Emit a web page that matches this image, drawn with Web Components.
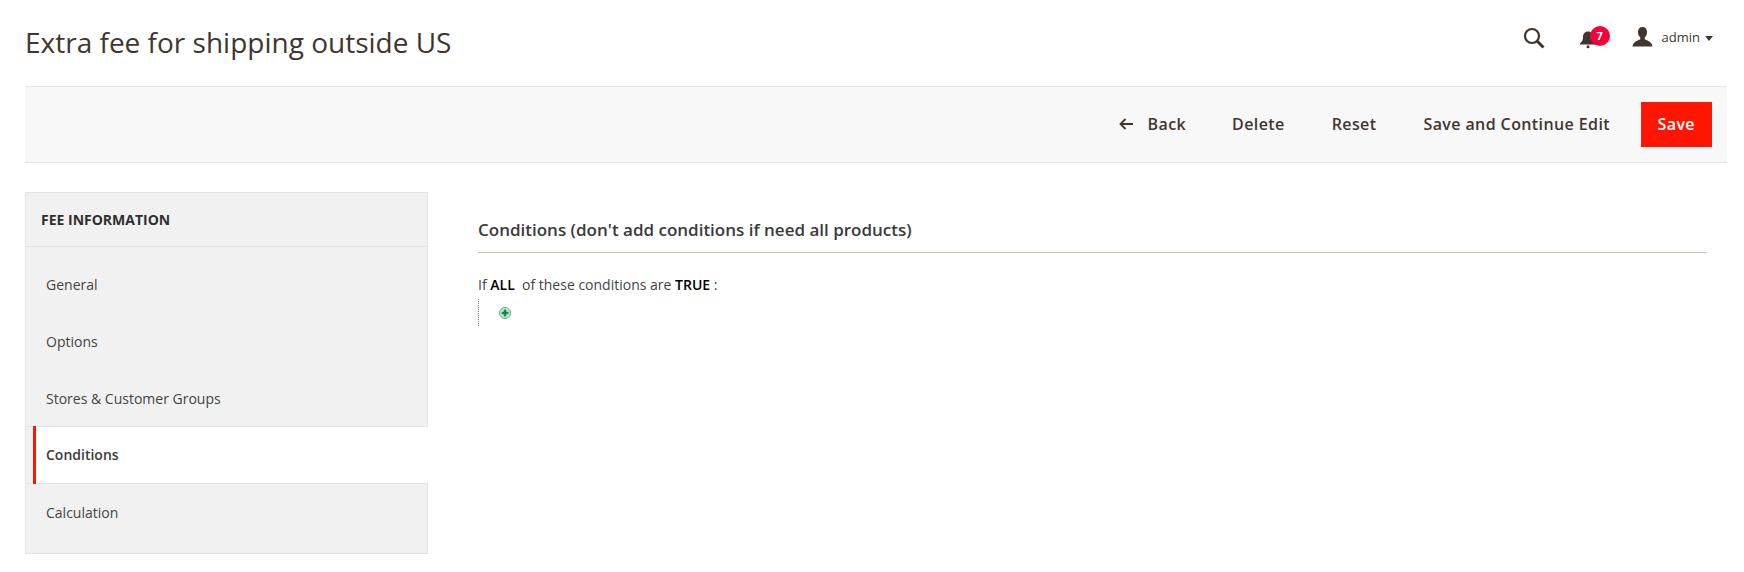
<!DOCTYPE html>
<html lang="en">
<head>
<meta charset="utf-8">
<title>Extra fee for shipping outside US</title>
<style>
  html, body { margin: 0; background: #fff; }
  body { font-family: "Open Sans", "Liberation Sans", sans-serif; color: #41362f; }
</style>
</head>
<body>
<fee-page>
  <page-header slot="header" title="Extra fee for shipping outside US" user="admin" count="7"></page-header>
  <action-bar slot="actions">
    <action-button icon="back">Back</action-button>
    <action-button>Delete</action-button>
    <action-button>Reset</action-button>
    <action-button>Save and Continue Edit</action-button>
    <action-button primary>Save</action-button>
  </action-bar>
  <side-tabs slot="side" heading="FEE INFORMATION">
    <side-tab>General</side-tab>
    <side-tab>Options</side-tab>
    <side-tab>Stores &amp; Customer Groups</side-tab>
    <side-tab active>Conditions</side-tab>
    <side-tab>Calculation</side-tab>
  </side-tabs>
  <conditions-panel heading="Conditions (don't add conditions if need all products)"></conditions-panel>
</fee-page>

<script>
// Page frame: header, action bar, then sidebar + content columns
class FeePage extends HTMLElement {
  constructor() {
    super();
    this.attachShadow({ mode: 'open' });
    this.shadowRoot.innerHTML = `
      <style>
        :host { display: block; padding: 0 17px 0 25px; }
        .columns { display: grid; grid-template-columns: 403px 1fr; column-gap: 50px; padding-top: 29px; }
        .main { padding-right: 20px; }
      </style>
      <slot name="header"></slot>
      <slot name="actions"></slot>
      <div class="columns">
        <slot name="side"></slot>
        <div class="main"><slot></slot></div>
      </div>
    `;
  }
}

class PageHeader extends HTMLElement {
  connectedCallback() {
    if (this.shadowRoot) return;
    this.attachShadow({ mode: 'open' });
    this.shadowRoot.innerHTML = `
      <style>
        :host { display: flex; align-items: center; justify-content: space-between; height: 86px; }
        h1 { margin: 0 0 2px; font: 400 28px/36px "Open Sans", sans-serif; color: #41362f; }
        .tools { display: flex; align-items: center; padding-right: 14px; padding-bottom: 11px; }
        .search { width: 22px; height: 22px; display: block; margin-right: 33px; }
        .bell { position: relative; width: 20px; height: 20px; margin: 2px 34px 0 0; }
        .bell svg { display: block; width: 20px; height: 20px; }
        .badge {
          position: absolute; left: 12px; top: -3px; width: 20px; height: 20px; border-radius: 50%;
          background: #f6003c; color: #fff; font: 700 11px/20px "Open Sans", sans-serif; text-align: center;
        }
        .person { width: 21px; height: 21px; display: block; margin-right: 9px; }
        .name { font: 400 13px/18px "Open Sans", sans-serif; color: #41362f; margin-bottom: 2px; }
        .caret { width: 0; height: 0; margin-left: 5px; margin-top: 2px; border: 4px solid transparent; border-top: 5px solid #41362f; border-bottom: 0; }
      </style>
      <h1>${this.getAttribute('title')}</h1>
      <div class="tools">
        <svg class="search" viewBox="0 0 22 22" fill="none" stroke="#41362f">
          <circle cx="9" cy="9" r="7" stroke-width="2.2"/>
          <path d="M14 14l6.5 6.5" stroke-width="3"/>
        </svg>
        <div class="bell">
          <svg viewBox="0 0 20 20" fill="#41362f">
            <path d="M10 2.500c-3.400 0-5 2.600-5 5.600 0 3.200-.8 4.600-3 6.400v1h16v-1c-2.200-1.800-3-3.200-3-6.400 0-3-1.600-5.600-5-5.600z"/>
            <circle cx="10" cy="17.700" r="1.500"/>
          </svg>
          <span class="badge">${this.getAttribute('count')}</span>
        </div>
        <svg class="person" viewBox="0 0 20 20" fill="#41362f">
          <path d="M10 0c-2.900 0-4.300 2-4.300 4.700 0 2.300 1 4.200 2.200 5.200v1.800C5.300 13.200 1 13.800.5 18.500h19c-.5-4.700-4.800-5.300-7.400-6.800V9.900c1.200-1 2.200-2.900 2.200-5.200C14.300 2 12.900 0 10 0z"/>
        </svg>
        <span class="name">${this.getAttribute('user')}</span>
        <span class="caret"></span>
      </div>
    `;
  }
}

class ActionBar extends HTMLElement {
  constructor() {
    super();
    this.attachShadow({ mode: 'open' });
    this.shadowRoot.innerHTML = `
      <style>
        :host {
          display: flex; justify-content: flex-end; align-items: center; gap: 0;
          height: 75px; padding-right: 15px; background: #f8f8f8;
          border-top: 1px solid #e3e3e3; border-bottom: 1px solid #e3e3e3;
        }
      </style>
      <slot></slot>
    `;
  }
}

class ActionButton extends HTMLElement {
  connectedCallback() {
    if (this.shadowRoot) return;
    this.attachShadow({ mode: 'open' });
    const back = this.getAttribute('icon') === 'back' ? `
      <svg viewBox="0 0 14 12" fill="none" stroke="#41362f" stroke-width="1.800">
        <path d="M14 6H1.500M6.500 1L1.500 6l5 5"/>
      </svg>` : '';
    this.shadowRoot.innerHTML = `
      <style>
        :host { display: block; margin-left: 17px; }
        :host([primary]) { margin-left: 15.5px; }
        :host([icon]) { margin-right: -1px; }
        .btn {
          display: flex; align-items: center; box-sizing: border-box; height: 45px; padding: 0 15px 2px;
          font: 600 16px/22px "Open Sans", sans-serif; letter-spacing: .4px; color: #41362f;
        }
        :host([primary]) .btn { background: #ff1500; color: #fff; padding: 0 17px 2px; }
        svg { width: 14px; height: 12px; margin-right: 15px; }
      </style>
      <div class="btn">${back}<slot></slot></div>
    `;
  }
}

class SideTabs extends HTMLElement {
  connectedCallback() {
    if (this.shadowRoot) return;
    this.attachShadow({ mode: 'open' });
    this.shadowRoot.innerHTML = `
      <style>
        :host { display: block; background: #f1f1f1; border: 1px solid #e3e3e3; height: 362px; box-sizing: border-box; }
        .title {
          height: 53px; padding-left: 15px; border-bottom: 1px solid #e3e3e3; margin-bottom: 9px;
          display: flex; align-items: center;
          font: 700 14px/20px "Open Sans", sans-serif; color: #303030;
        }
      </style>
      <div class="title">${this.getAttribute('heading')}</div>
      <slot></slot>
    `;
  }
}

class SideTab extends HTMLElement {
  constructor() {
    super();
    this.attachShadow({ mode: 'open' });
    this.shadowRoot.innerHTML = `
      <style>
        :host {
          display: flex; align-items: center; box-sizing: border-box; height: 57px;
          padding-left: 20px; font: 400 14px/20px "Open Sans", sans-serif; color: #444;
        }
        :host([active]) {
          position: relative; height: 58px; margin: -1px -1px 0 0;
          background: linear-gradient(to right, #f1f1f1 7px, #fff 7px);
          font-weight: 600; color: #3a3a3a;
          border-top: 1px solid #e3e3e3; border-bottom: 1px solid #e3e3e3;
        }
        /* red marker sits over the row borders */
        :host([active])::before {
          content: ""; position: absolute; left: 7px; top: -1px; bottom: -1px; width: 3px; background: #ff1500;
        }
      </style>
      <slot></slot>
    `;
  }
}

class ConditionsPanel extends HTMLElement {
  connectedCallback() {
    if (this.shadowRoot) return;
    this.attachShadow({ mode: 'open' });
    this.shadowRoot.innerHTML = `
      <style>
        :host { display: block; padding-top: 26px; font: 400 14px/20px "Open Sans", sans-serif; color: #444; }
        h2 {
          margin: 0 0 22px; padding-bottom: 11px; border-bottom: 1px solid #cac3b4;
          font: 600 17px/23px "Open Sans", sans-serif; color: #3a3a3a;
        }
        b { font-weight: 600; color: #000; }
        /* dots drawn by hand, 1px on 1px off like the rule tree in the reference */
        .tree {
          width: 27px; height: 28px; margin-top: 4px; padding: 8px 0 0 21px; box-sizing: border-box;
          background: repeating-linear-gradient(to bottom, #777 0 1px, transparent 1px 2px) left top / 1px 100% no-repeat;
        }
        svg { display: block; width: 12px; height: 12px; }
      </style>
      <h2>${this.getAttribute('heading')}</h2>
      <div>If <b>ALL</b> &nbsp;of these conditions are <b>TRUE</b> :</div>
      <div class="tree">
        <svg viewBox="0 0 13 13">
          <circle cx="6.500" cy="6.500" r="6" fill="#cfe8d8" stroke="#4fa877"/>
          <path d="M6.500 2.800v7.400M2.800 6.500h7.400" stroke="#0a9148" stroke-width="2.800"/>
        </svg>
      </div>
    `;
  }
}

customElements.define('fee-page', FeePage);
customElements.define('page-header', PageHeader);
customElements.define('action-bar', ActionBar);
customElements.define('action-button', ActionButton);
customElements.define('side-tabs', SideTabs);
customElements.define('side-tab', SideTab);
customElements.define('conditions-panel', ConditionsPanel);
</script>
</body>
</html>
